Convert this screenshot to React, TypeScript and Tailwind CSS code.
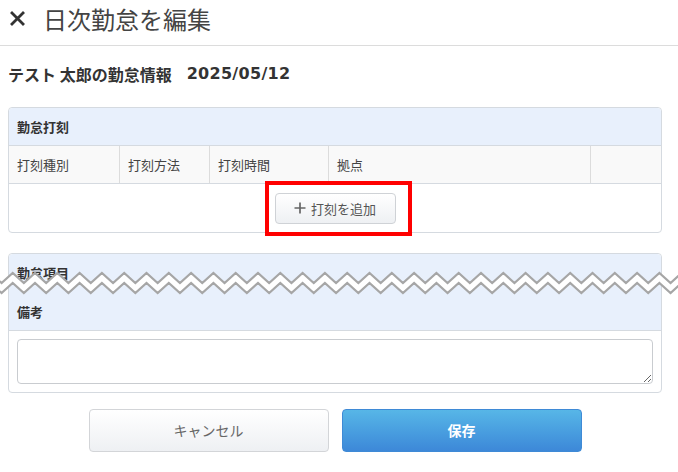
import React from "react";

function Zigzag() {
  const period = 22.3;
  const start = 12.7 - period * 2;
  const top: string[] = [];
  const bottom: string[] = [];
  for (let k = 0; k < 36; k++) {
    const xp = start + k * period;
    const xv = xp + period / 2;
    top.push(`${xp.toFixed(2)},3`, `${xv.toFixed(2)},13`);
    bottom.push(`${xp.toFixed(2)},13`, `${xv.toFixed(2)},23`);
  }
  const poly = [...top, ...bottom.slice().reverse()].join(" ");
  return (
    <svg
      className="absolute left-0 top-[270px] z-20"
      width="678"
      height="26"
      viewBox="0 0 678 26"
    >
      <polygon points={poly} fill="#ffffff" />
      <polyline points={top.join(" ")} fill="none" stroke="#a6a6a6" strokeWidth="2.2" />
      <polyline points={bottom.join(" ")} fill="none" stroke="#a6a6a6" strokeWidth="2.2" />
    </svg>
  );
}

export default function App() {
  return (
    <div className="relative w-[678px] h-[472px] bg-white text-[#333] [font-family:'Noto_Sans_CJK_JP','Noto_Sans',sans-serif] overflow-hidden">
      {/* Title bar */}
      <div className="h-[46px] border-b border-[#dcdcdc]">
        <div className="flex items-center h-[37px] pl-[10px]">
          <svg width="15" height="15" viewBox="0 0 15 15">
            <path d="M2 2L13 13M13 2L2 13" stroke="#333" strokeWidth="2.8" strokeLinecap="square" />
          </svg>
          <span className="ml-[18px] text-[24px] leading-none text-[#444]">日次勤怠を編集</span>
        </div>
      </div>

      <div className="pl-[8px] pr-[16px]">
        <div className="h-[56px] flex items-center text-[16px] font-bold text-[#333] leading-none">
          <span>テスト 太郎の勤怠情報</span>
          <span className="ml-[15px] [font-family:'DejaVu_Sans',sans-serif] text-[16px] tracking-[0.3px]">2025/05/12</span>
        </div>

        {/* Card 1 */}
        <div className="relative mt-[5px] border border-[#d5dae0] rounded-[4px]">
          <div className="h-[38px] flex items-center px-[8px] bg-[#e8f0fc] rounded-t-[4px] border-b border-[#d5dae0] text-[13px] font-bold text-[#333]">
            勤怠打刻
          </div>
          <div className="grid grid-cols-[111px_90px_119px_262px_1fr] h-[38px] bg-[#f9f9f9] border-b border-[#d5dae0] text-[13px] text-[#444]">
            <div className="flex items-center pl-[8px] border-r border-[#dcdcdc]">打刻種別</div>
            <div className="flex items-center pl-[8px] border-r border-[#dcdcdc]">打刻方法</div>
            <div className="flex items-center pl-[8px] border-r border-[#dcdcdc]">打刻時間</div>
            <div className="flex items-center pl-[8px] border-r border-[#dcdcdc]">拠点</div>
            <div></div>
          </div>
          <div className="h-[48px] flex items-center justify-center">
            <button className="flex items-center justify-center w-[121px] h-[31px] border border-[#cfd2d6] rounded-[4px] bg-gradient-to-b from-[#ffffff] to-[#eef0f3] text-[13px] text-[#555] leading-none">
              <svg width="12" height="12" viewBox="0 0 12 12" className="mr-[5px]">
                <path d="M6 0.5V11.5M0.5 6H11.5" stroke="#666" strokeWidth="1.7" />
              </svg>
              打刻を追加
            </button>
          </div>
          <div className="absolute left-[256px] top-[73px] w-[147px] h-[55px] border-[4px] border-[#ff0000] z-10"></div>
        </div>

        {/* Card 2 */}
        <div className="mt-[20px] border border-[#d5dae0] rounded-[4px]">
          <div className="h-[39px] flex items-start pt-[9px] px-[8px] bg-[#e8f0fc] rounded-t-[4px] text-[13px] font-bold text-[#333]">
            勤怠項目
          </div>
          <div className="h-[38px] flex items-center px-[8px] bg-[#e8f0fc] border-b border-[#d5dae0] text-[13px] font-bold text-[#333]">
            備考
          </div>
          <div className="px-[8px] py-[8px]">
            <textarea className="block w-full h-[45px] border border-[#c9ccd0] rounded-[4px] bg-white"></textarea>
          </div>
        </div>

        <div className="mt-[16px] flex justify-center gap-[13px]">
          <button className="w-[240px] h-[43px] border border-[#d3d5d8] rounded-[4px] bg-gradient-to-b from-[#ffffff] to-[#eef0f3] text-[14px] text-[#666]">
            キャンセル
          </button>
          <button className="w-[240px] h-[43px] border border-[#3f8ad6] rounded-[4px] bg-gradient-to-b from-[#57b6e7] to-[#3d88d8] text-[14px] font-bold text-white">
            保存
          </button>
        </div>
      </div>

      <Zigzag />
    </div>
  );
}
